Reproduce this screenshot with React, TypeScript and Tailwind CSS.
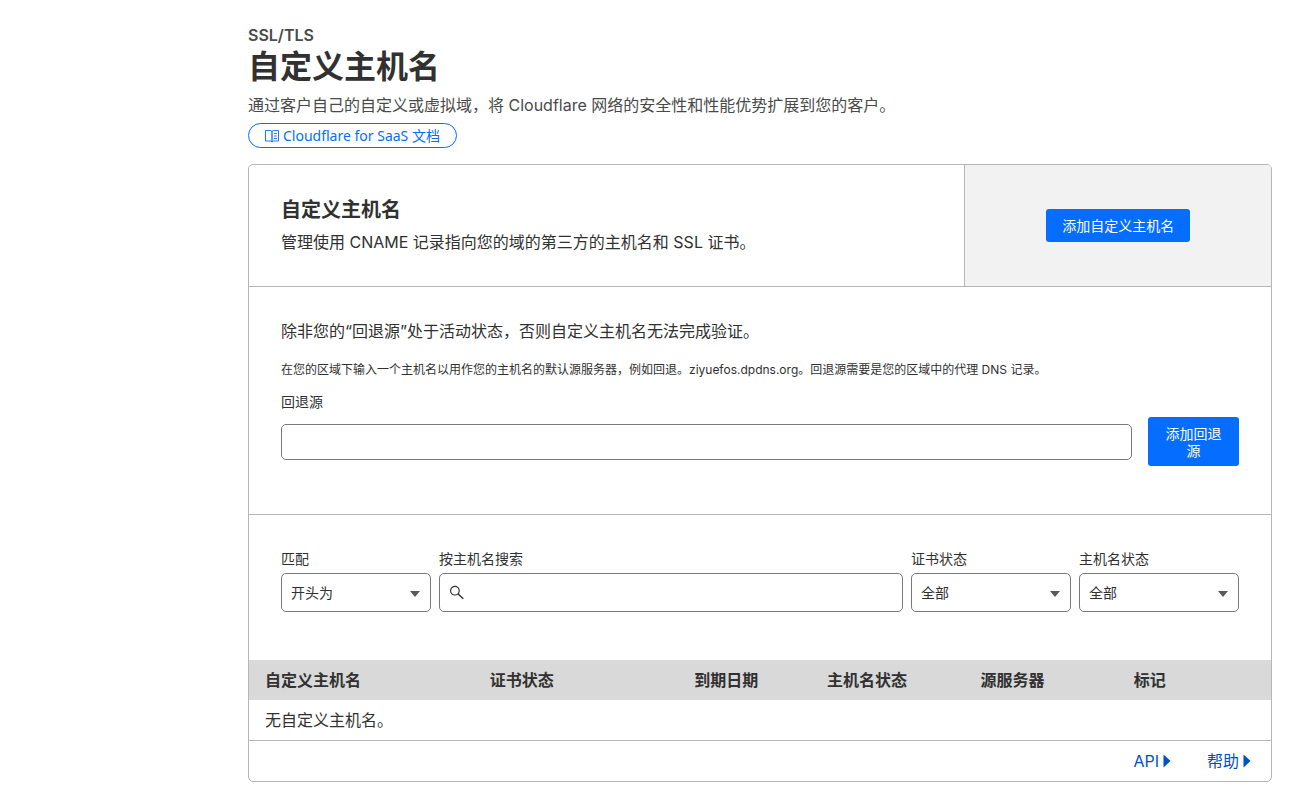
import React from 'react';

interface SelectFieldProps {
  id: string;
  label: string;
  options: string[];
  className: string;
}

interface FooterLinkProps {
  label: string;
}

const columns = [
  { label: '自定义主机名', width: 'w-[22%]' },
  { label: '证书状态', width: 'w-[20%]' },
  { label: '到期日期', width: 'w-[13%]' },
  { label: '主机名状态', width: 'w-[15%]' },
  { label: '源服务器', width: 'w-[15%]' },
  { label: '标记', width: 'w-[15%]' },
];

const BookIcon: React.FC = () => (
  <svg width="14" height="14" viewBox="0 0 14 14" fill="none" stroke="currentColor" strokeWidth="0.9" aria-hidden="true">
    <path d="M0.5 1.5H5.5L7 2.3L8.5 1.5H13.5V12H8.5L7 12.8L5.5 12H0.5Z" />
    <path d="M7 2.3V12.8" strokeWidth="1.3" />
    <path d="M8.8 4.5H11.8M8.8 7H11.8M8.8 9.5H11.8" />
  </svg>
);

const SearchIcon: React.FC = () => (
  <svg width="16" height="16" viewBox="0 0 16 16" fill="none" stroke="currentColor" aria-hidden="true">
    <circle cx="5.9" cy="5.7" r="4.3" strokeWidth="1.2" />
    <path d="M8.9 8.7L14.3 13.8" strokeWidth="1.5" />
  </svg>
);

const SelectField: React.FC<SelectFieldProps> = ({ id, label, options, className }) => (
  <div className={className}>
    <label htmlFor={id} className="block mb-1 text-sm leading-5">
      {label}
    </label>
    <div className="relative">
      <select
        id={id}
        className="block w-full h-[39px] appearance-none rounded-[5px] border border-[#797979] bg-white pl-[9px] pr-8 text-sm"
      >
        {options.map((option) => (
          <option key={option}>{option}</option>
        ))}
      </select>
      <svg
        width="10"
        height="6"
        viewBox="0 0 10 6"
        className="pointer-events-none absolute right-[11px] top-[18px] text-[#595959]"
        aria-hidden="true"
      >
        <path d="M0 0H10L5 6Z" fill="currentColor" />
      </svg>
    </div>
  </div>
);

const FooterLink: React.FC<FooterLinkProps> = ({ label }) => (
  <a href="#" className="flex items-center gap-1 text-[#0051c3] hover:underline">
    {label}
    <svg width="8" height="14" viewBox="0 0 8 14" aria-hidden="true">
      <path d="M0.5 0.5L7.5 7L0.5 13.5Z" fill="currentColor" />
    </svg>
  </a>
);

const App: React.FC = () => {
  return (
    <main className="min-h-screen bg-white pt-[25px] pb-3 pl-[248px] pr-[38px] font-['Inter','Noto_Sans_CJK_SC',sans-serif] text-base text-[#313131]">
      <header className="text-[#4a4a4a]">
        <p className="font-semibold leading-5">SSL/TLS</p>
        <h1 className="mt-0.5 text-[32px] leading-10 font-bold text-[#313131]">自定义主机名</h1>
        <p className="mt-1.5 leading-6">
          通过客户自己的自定义或虚拟域，将 Cloudflare 网络的安全性和性能优势扩展到您的客户。
        </p>
        <div className="mt-1.5 flex">
          <a
            href="#"
            className="inline-flex h-[25px] items-center gap-1 rounded-full border border-[#056dff] px-4 font-['Noto_Sans','Noto_Sans_CJK_SC',sans-serif] text-sm text-[#056dff]"
          >
            <BookIcon />
            Cloudflare for SaaS 文档
          </a>
        </div>
      </header>

      <div className="mt-4 overflow-hidden rounded-[5px] border border-[#b6b6b6]">
        <section className="flex border-b border-[#b6b6b6]">
          <div className="w-7/10 p-8">
            <h2 className="text-xl leading-[27px] font-bold">自定义主机名</h2>
            <p className="mt-1.5 leading-6">管理使用 CNAME 记录指向您的域的第三方的主机名和 SSL 证书。</p>
          </div>
          <div className="flex w-3/10 items-center justify-center border-l border-[#b6b6b6] bg-[#f2f2f2]">
            <button type="button" className="h-[33px] rounded-[3px] bg-[#056dff] px-4 text-sm text-white">
              添加自定义主机名
            </button>
          </div>
        </section>

        <section className="border-b border-[#b6b6b6] px-8 pt-8 pb-12">
          <p className="leading-6">除非您的“回退源”处于活动状态，否则自定义主机名无法完成验证。</p>
          <p className="mt-[17px] text-xs leading-5">
            在您的区域下输入一个主机名以用作您的主机名的默认源服务器，例如回退。ziyuefos.dpdns.org。回退源需要是您的区域中的代理 DNS 记录。
          </p>
          <label htmlFor="fallback-origin" className="mt-3 mb-[5px] block text-sm leading-5">
            回退源
          </label>
          <div className="flex items-center gap-4">
            <input
              id="fallback-origin"
              type="text"
              className="h-9 min-w-0 flex-1 rounded-[5px] border border-[#797979] px-2"
            />
            <button
              type="button"
              className="h-[49px] w-[91px] rounded-[3px] bg-[#056dff] px-4 text-sm leading-[17px] text-white"
            >
              添加回退源
            </button>
          </div>
        </section>

        <section className="flex gap-2 px-8 pt-[34px] pb-12">
          <SelectField id="match" label="匹配" options={['开头为', '包含']} className="w-[150px]" />
          <div className="min-w-0 flex-1">
            <label htmlFor="hostname-search" className="block mb-1 text-sm leading-5">
              按主机名搜索
            </label>
            <div className="flex h-[39px] items-center gap-2 rounded-[5px] border border-[#797979] px-[9px]">
              <SearchIcon />
              <input id="hostname-search" type="text" className="min-w-0 flex-1 text-sm outline-none" />
            </div>
          </div>
          <SelectField id="cert-status" label="证书状态" options={['全部', '有效']} className="w-40" />
          <SelectField id="hostname-status" label="主机名状态" options={['全部', '有效']} className="w-40" />
        </section>

        <table className="w-full table-fixed text-left">
          <thead className="bg-[#d9d9d9]">
            <tr className="h-10">
              {columns.map((column) => (
                <th key={column.label} scope="col" className={`px-4 font-semibold ${column.width}`}>
                  {column.label}
                </th>
              ))}
            </tr>
          </thead>
          <tbody>
            <tr className="h-10">
              <td colSpan={columns.length} className="px-4">
                无自定义主机名。
              </td>
            </tr>
          </tbody>
        </table>

        <footer className="flex h-[41px] items-center justify-end gap-9 border-t border-[#b6b6b6] px-5">
          <FooterLink label="API" />
          <FooterLink label="帮助" />
        </footer>
      </div>
    </main>
  );
};

export default App;
